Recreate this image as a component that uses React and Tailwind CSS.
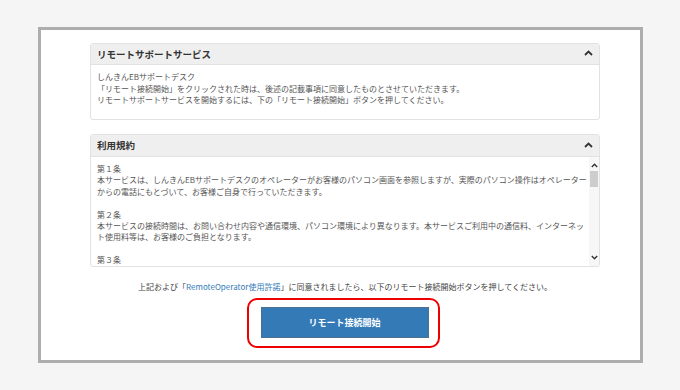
import React from 'react';

const font = { fontFamily: '"Noto Sans CJK JP", "Noto Sans", sans-serif' };

function Caret({ up = true, className = '' }) {
  return (
    <svg width="9" height="6" viewBox="0 0 9 6" className={className}>
      <polyline
        points={up ? '1,5 4.5,1.5 8,5' : '1,1 4.5,4.5 8,1'}
        fill="none"
        stroke="#333"
        strokeWidth="1.8"
      />
    </svg>
  );
}

function PanelHeader({ title, height }) {
  return (
    <div className={`flex items-center justify-between border-b border-[#e2e2e2] bg-[#efefef] pl-[6px] pr-[6px] ${height}`}>
      <span className="text-[9.5px] font-bold text-[#333]">{title}</span>
      <Caret className="mt-[-2px]" />
    </div>
  );
}

const terms = [
  '第１条',
  '本サービスは、しんきんEBサポートデスクのオペレーターがお客様のパソコン画面を参照しますが、実際のパソコン操作はオペレーター',
  'からの電話にもとづいて、お客様ご自身で行っていただきます。',
  '',
  '第２条',
  '本サービスの接続時間は、お問い合わせ内容や通信環境、パソコン環境により異なります。本サービスご利用中の通信料、インターネッ',
  'ト使用料等は、お客様のご負担となります。',
  '',
  '第３条',
  '本サービスの利用にあたり、お客様のパソコンに専用のソフトウェアをダウンロードしていただきます。',
];

export default function App() {
  return (
    <div className="h-[390px] w-[680px] overflow-hidden bg-[#f5f5f5] pl-[38px] pt-[27px]" style={font}>
      <div className="flex h-[336px] w-[605px] flex-col border-[3px] border-[#adadad] bg-white pl-[49px] pr-[40px] pt-[13px]">
        {/* panel 1 */}
        <div className="h-[77px] overflow-hidden rounded-[3px] border border-[#e2e2e2]">
          <PanelHeader title="リモートサポートサービス" height="h-[21px]" />
          <div className="px-[6px] pt-[6px] text-[8px] leading-[11.5px] text-[#555]">
            <p>しんきんEBサポートデスク</p>
            <p>「リモート接続開始」をクリックされた時は、後述の記載事項に同意したものとさせていただきます。</p>
            <p>リモートサポートサービスを開始するには、下の「リモート接続開始」ボタンを押してください。</p>
          </div>
        </div>

        {/* panel 2 */}
        <div className="mt-[14px] h-[133px] overflow-hidden rounded-[3px] border border-[#e2e2e2]">
          <PanelHeader title="利用規約" height="h-[22px]" />
          <div className="flex h-[110px]">
            <div className="flex-1 overflow-hidden px-[6px] pt-[6px] text-[8px] leading-[11.4px] text-[#555]">
              {terms.map((t, i) => (
                <p key={i} className="h-[11.4px] whitespace-nowrap">{t}</p>
              ))}
            </div>
            <div className="flex w-[10px] flex-col items-center bg-[#f7f7f7] pt-[6px]">
              <Caret className="h-[5px] w-[7px]" />
              <div className="mt-[3px] h-[16px] w-[8px] bg-[#cdcdcd]" />
              <div className="flex-1" />
              <Caret up={false} className="mb-[7px] h-[5px] w-[7px]" />
            </div>
          </div>
        </div>

        {/* consent */}
        <p className="mt-[14px] text-center text-[8px] leading-[12px] text-[#444]">
          上記および「<span className="text-[#337ab7]">RemoteOperator使用許諾</span>」に同意されましたら、以下のリモート接続開始ボタンを押してください。
        </p>

        <div className="mt-[5px] flex justify-center">
          <div className="ml-[-4px] rounded-[10px] border-2 border-[#ee0000] pb-[8px] pl-[12px] pr-[9px] pt-[7px]">
            <button
              type="button"
              className="flex h-[31px] w-[168px] items-center justify-center border border-dotted border-[#666] bg-[#337ab7] text-[9px] font-bold text-white"
            >
              リモート接続開始
            </button>
          </div>
        </div>
      </div>
    </div>
  );
}
